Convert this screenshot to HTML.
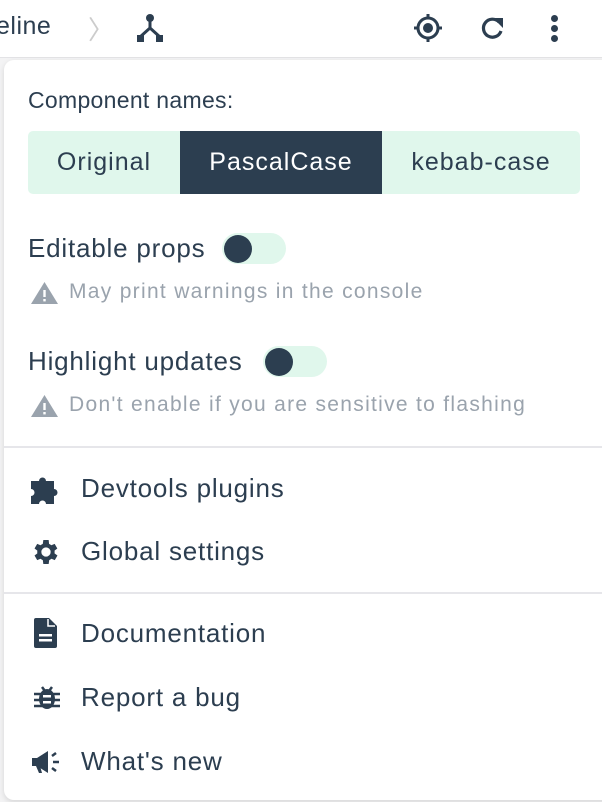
<!DOCTYPE html>
<html><head><meta charset="utf-8"><style>
*{margin:0;padding:0;box-sizing:border-box}
body{width:602px;height:802px;overflow:hidden;background:#f3f3f4;font-family:"Liberation Sans",sans-serif;color:#2c3e50;position:relative}
.hdr{position:absolute;left:0;top:0;width:602px;height:58px;background:#fff;border-bottom:1px solid #e3e3e6}
.pop{position:absolute;left:4px;top:60px;width:620px;height:740px;background:#fff;border-radius:10px;box-shadow:0 2px 6px rgba(0,0,0,.12)}
.t{position:absolute;white-space:nowrap}
.seg{position:absolute;top:131px;height:63px;background:#e0f7ec;font-size:25px;letter-spacing:1px;display:flex;align-items:center;justify-content:center}
.tog{position:absolute;width:64px;height:31px;border-radius:16px;background:#e0f7ec}
.tog i{position:absolute;left:2px;top:2px;width:28px;height:28px;border-radius:50%;background:#2c3e50}
.warn{font-size:21px;letter-spacing:1.3px;color:#9aa3ad}
.item{font-size:26px;letter-spacing:.8px}
.div{position:absolute;left:4px;width:598px;height:2px;background:#e6e6ea}
</style></head><body>
<div class="hdr">
<div class="t" style="left:-4px;top:12px;font-size:25px;letter-spacing:.5px">eline</div>
<div class="t" style="left:88px;top:10px;font-size:26px;color:#ccc">〉</div>
<svg style="position:absolute;left:135px;top:13px" width="30" height="30" viewBox="0 0 30 30"><circle cx="15" cy="5" r="4" fill="#2c3e50"/><path d="M15 7v8L5 24M15 15l10 9" stroke="#2c3e50" stroke-width="3" fill="none"/><rect x="2" y="22" width="7" height="7" fill="#2c3e50"/><rect x="21" y="22" width="7" height="7" fill="#2c3e50"/></svg>
<svg style="position:absolute;left:412px;top:12px" width="32" height="32" viewBox="0 0 32 32"><circle cx="16" cy="16" r="10" stroke="#2c3e50" stroke-width="3" fill="none"/><circle cx="16" cy="16" r="5" fill="#2c3e50"/><path d="M16 2v5M16 25v5M2 16h5M25 16h5" stroke="#2c3e50" stroke-width="3"/></svg>
<svg style="position:absolute;left:478px;top:14px" width="28" height="28" viewBox="0 0 28 28"><path d="M21 8A9 9 0 1 0 23 17" stroke="#2c3e50" stroke-width="3.2" fill="none"/><path d="M15 4h10v10z" fill="#2c3e50"/></svg>
<div style="position:absolute;left:551px;top:15px;width:7px;height:7px;border-radius:50%;background:#2c3e50;box-shadow:0 10px 0 #2c3e50,0 20px 0 #2c3e50"></div>
</div>
<div class="pop"></div>
<div class="t" style="left:28px;top:87px;font-size:23px;letter-spacing:.3px">Component names:</div>
<div class="seg" style="left:28px;width:152px;border-radius:5px 0 0 5px">Original</div>
<div class="seg" style="left:180px;width:202px;background:#2c3e50;color:#fff">PascalCase</div>
<div class="seg" style="left:382px;width:198px;border-radius:0 5px 5px 0">kebab-case</div>
<div class="t item" style="left:28px;top:233px">Editable props</div>
<div class="tog" style="left:222px;top:233px"><i></i></div>
<svg style="position:absolute;left:30px;top:281px" width="29" height="24" viewBox="0 0 29 24"><path d="M14.5 1L28 23H1z" fill="#9aa3ad"/><rect x="13.3" y="9" width="2.4" height="7" fill="#fff"/><rect x="13.3" y="18" width="2.4" height="2.4" fill="#fff"/></svg>
<div class="t warn" style="left:69px;top:280px">May print warnings in the console</div>
<div class="t item" style="left:28px;top:346px">Highlight updates</div>
<div class="tog" style="left:263px;top:346px"><i></i></div>
<svg style="position:absolute;left:30px;top:394px" width="29" height="24" viewBox="0 0 29 24"><path d="M14.5 1L28 23H1z" fill="#9aa3ad"/><rect x="13.3" y="9" width="2.4" height="7" fill="#fff"/><rect x="13.3" y="18" width="2.4" height="2.4" fill="#fff"/></svg>
<div class="t warn" style="left:69px;top:393px">Don't enable if you are sensitive to flashing</div>
<div class="div" style="top:446px"></div>
<svg style="position:absolute;left:30px;top:473px" width="32" height="32" viewBox="0 0 32 32"><path d="M1 8h8a3.5 3.5 0 1 1 7 0h8v8a3.5 3.5 0 1 1 0 7v8H16a3.5 3.5 0 1 0-7 0H1v-8a3.5 3.5 0 1 0 0-7z" fill="#2c3e50"/></svg>
<div class="t item" style="left:81px;top:473px">Devtools plugins</div>
<svg style="position:absolute;left:30px;top:536px" width="32" height="32" viewBox="0 0 24 24"><path fill="#2c3e50" d="M19.4 13a7.5 7.5 0 0 0 0-2l2.1-1.6-2-3.5-2.5 1a7 7 0 0 0-1.7-1L15 3h-4l-.4 2.9a7 7 0 0 0-1.7 1l-2.5-1-2 3.5L6.5 11a7.5 7.5 0 0 0 0 2l-2.1 1.6 2 3.5 2.5-1a7 7 0 0 0 1.7 1L11 21h4l.4-2.9a7 7 0 0 0 1.7-1l2.5 1 2-3.5zM13 15.5a3.5 3.5 0 1 1 0-7 3.5 3.5 0 0 1 0 7z" transform="translate(-1 0)"/></svg>
<div class="t item" style="left:81px;top:536px">Global settings</div>
<div class="div" style="top:592px"></div>
<svg style="position:absolute;left:33px;top:617px" width="26" height="32" viewBox="0 0 26 32"><path d="M3 1h13l8 8v20a2 2 0 0 1-2 2H3a2 2 0 0 1-2-2V3a2 2 0 0 1 2-2z" fill="#2c3e50"/><rect x="6" y="17" width="13" height="2.5" fill="#fff"/><rect x="6" y="22" width="13" height="2.5" fill="#fff"/><path d="M15 2v7h7" stroke="#fff" stroke-width="1.5" fill="none"/></svg>
<div class="t item" style="left:81px;top:618px">Documentation</div>
<svg style="position:absolute;left:33px;top:683px" width="28" height="28" viewBox="0 0 28 28"><ellipse cx="14" cy="16" rx="8" ry="10" fill="#2c3e50"/><path d="M9 4l3 4M19 4l-3 4M1 11h26M1 17h26M1 23h26" stroke="#2c3e50" stroke-width="2.5"/><rect x="10" y="12" width="8" height="2.5" fill="#fff"/><rect x="10" y="18" width="8" height="2.5" fill="#fff"/></svg>
<div class="t item" style="left:81px;top:682px">Report a bug</div>
<svg style="position:absolute;left:31px;top:748px" width="30" height="28" viewBox="0 0 30 28"><path d="M1 10h5l11-7v22L6 18H1z" fill="#2c3e50"/><path d="M5 18l3 7h3l-2-7" fill="#2c3e50"/><path d="M21 8l4-3M22 14h6M21 20l4 3" stroke="#2c3e50" stroke-width="2.5"/></svg>
<div class="t item" style="left:81px;top:746px">What's new</div>
</body></html>
